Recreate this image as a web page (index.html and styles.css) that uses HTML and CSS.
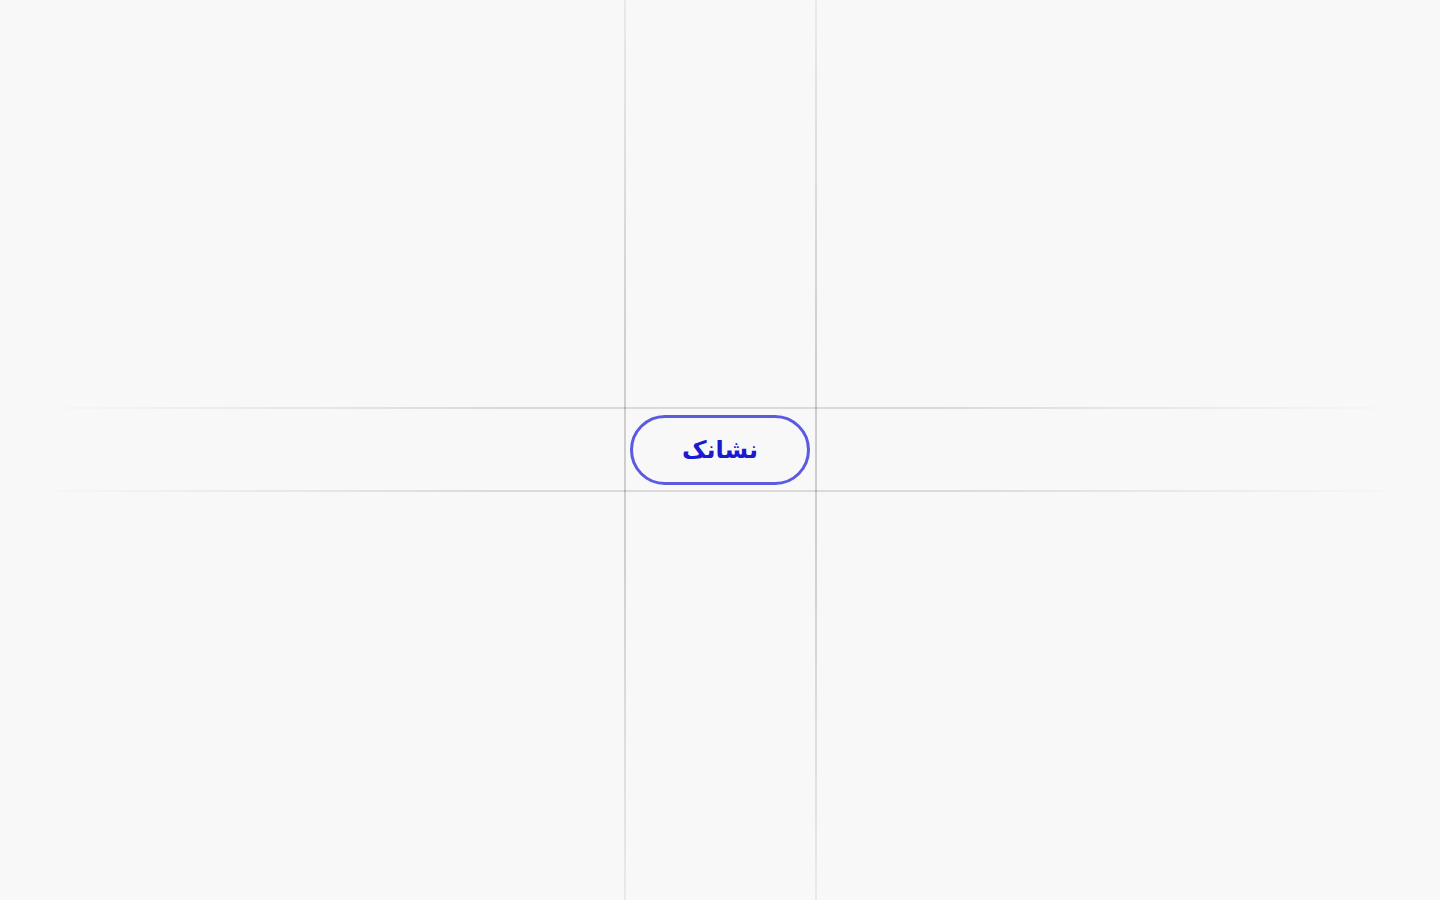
FILE: index.html
```html
<!DOCTYPE html>
<html lang="fa" dir="rtl">
<head>
    <meta charset="UTF-8">
    <meta name="viewport" content="width=device-width, initial-scale=1.0">
    <title>نشانک</title>
    <link rel="stylesheet" href="styles.css">
</head>
<body>

    <main class="stage">
        <span class="guide guide-v guide-v1"></span>
        <span class="guide guide-v guide-v2"></span>
        <span class="guide guide-h guide-h1"></span>
        <span class="guide guide-h guide-h2"></span>
        <div class="cell">
            <button class="bookmark-btn">نشانک</button>
        </div>
    </main>

</body>
</html>
```

FILE: styles.css
```css
/* --- Grundlayout --- */
* {
    box-sizing: border-box;
    margin: 0;
    padding: 0;
}

body {
    background-color: #f8f8f8;
    font-family: 'DejaVu Sans', 'Noto Sans', sans-serif;
    overflow: hidden;
}

/* 5x5 Raster: Fläche | Linie | Button | Linie | Fläche */
.stage {
    direction: ltr;
    height: 100vh;
    display: grid;
    grid-template-columns: 624px 2px 189px 2px 1fr;
    grid-template-rows: 407px 2px 81px 2px 1fr;
}

.guide-v {
    grid-row: 1 / -1;
    background: linear-gradient(to bottom, rgba(0,0,0,0.06), rgba(0,0,0,0.17) 40%, rgba(0,0,0,0.17) 60%, rgba(0,0,0,0.06));
}

.guide-v1 { grid-column: 2; }
.guide-v2 { grid-column: 4; }

.guide-h {
    grid-column: 1 / -1;
    background: linear-gradient(to right, rgba(0,0,0,0) 30px, rgba(0,0,0,0.12) 35%, rgba(0,0,0,0.12) 65%, rgba(0,0,0,0) calc(100% - 30px));
}

.guide-h1 { grid-row: 2; }
.guide-h2 { grid-row: 4; }

.cell {
    grid-column: 3;
    grid-row: 3;
    padding: 6px 5px 5px 4px;
    display: flex;
    justify-content: center;
    align-items: center;
    z-index: 1;
}

.bookmark-btn {
    width: 180px;
    height: 70px;
    border: 3px solid #5b5be0;
    border-radius: 35px;
    background-color: #f8f8f8;
    color: #1a1ad0;
    font-family: 'DejaVu Sans', 'Noto Sans', sans-serif;
    font-size: 24px;
    font-weight: bold;
    cursor: pointer;
}
```
